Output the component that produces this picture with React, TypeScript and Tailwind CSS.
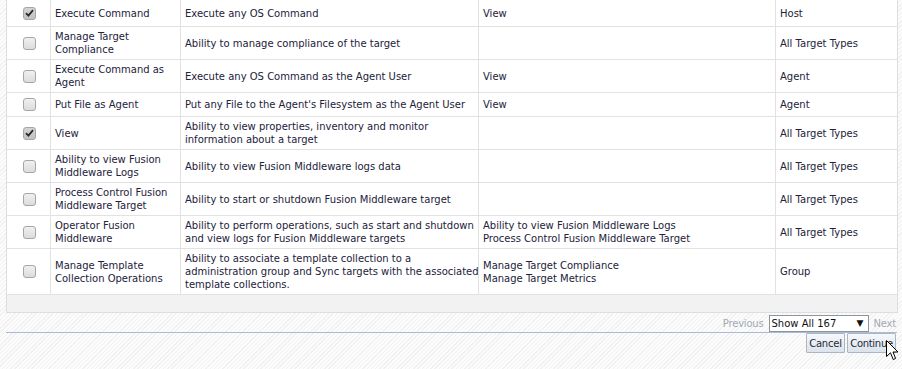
import React from "react";

type Row = {
  checked: boolean;
  name: string[];
  desc: string[];
  incl: string[];
  type: string;
  h: string;
};

const rows: Row[] = [
  { checked: true, name: ["Execute Command"], desc: ["Execute any OS Command"], incl: ["View"], type: "Host", h: "h-[27px]" },
  { checked: false, name: ["Manage Target", "Compliance"], desc: ["Ability to manage compliance of the target"], incl: [], type: "All Target Types", h: "h-[33px]" },
  { checked: false, name: ["Execute Command as", "Agent"], desc: ["Execute any OS Command as the Agent User"], incl: ["View"], type: "Agent", h: "h-[33px]" },
  { checked: false, name: ["Put File as Agent"], desc: ["Put any File to the Agent's Filesystem as the Agent User"], incl: ["View"], type: "Agent", h: "h-[24px]" },
  { checked: true, name: ["View"], desc: ["Ability to view properties, inventory and monitor", "information about a target"], incl: [], type: "All Target Types", h: "h-[33px]" },
  { checked: false, name: ["Ability to view Fusion", "Middleware Logs"], desc: ["Ability to view Fusion Middleware logs data"], incl: [], type: "All Target Types", h: "h-[33px]" },
  { checked: false, name: ["Process Control Fusion", "Middleware Target"], desc: ["Ability to start or shutdown Fusion Middleware target"], incl: [], type: "All Target Types", h: "h-[33px]" },
  { checked: false, name: ["Operator Fusion", "Middleware"], desc: ["Ability to perform operations, such as start and shutdown", "and view logs for Fusion Middleware targets"], incl: ["Ability to view Fusion Middleware Logs", "Process Control Fusion Middleware Target"], type: "All Target Types", h: "h-[33px]" },
  { checked: false, name: ["Manage Template", "Collection Operations"], desc: ["Ability to associate a template collection to a", "administration group and Sync targets with the associated", "template collections."], incl: ["Manage Target Compliance", "Manage Target Metrics"], type: "Group", h: "h-[46px]" },
];

function Lines({ lines }: { lines: string[] }) {
  return (
    <div className="flex flex-col">
      {lines.map((l, i) => (
        <span key={i} className="whitespace-nowrap">{l}</span>
      ))}
    </div>
  );
}

function Checkbox({ checked }: { checked: boolean }) {
  return (
    <div
      className={
        "w-[13px] h-[13px] rounded-[3px] border border-[#a6a6a6] flex items-center justify-center " +
        (checked
          ? "bg-[linear-gradient(#d4d4d4,#c2c2c2)]"
          : "bg-[linear-gradient(#f0f0f0,#dcdcdc)]")
      }
    >
      {checked && (
        <svg width="9" height="8" viewBox="0 0 9 8">
          <path d="M1 4.2 L3.4 6.6 L8 1.2" fill="none" stroke="#2a2a2a" strokeWidth="1.8" />
        </svg>
      )}
    </div>
  );
}

export default function App() {
  return (
    <div className="w-[902px] h-[369px] overflow-hidden relative bg-[image:repeating-linear-gradient(-45deg,#f1f1f1_0px,#f1f1f1_1px,#fcfcfc_1px,#fcfcfc_3px)] font-['DejaVu_Sans',sans-serif] text-[10px] leading-[13px] text-[#22223a]">
      <div className="ml-[6px] w-[892px] border-l border-r border-[#dedede] bg-white">
        {rows.map((r, i) => (
          <div
            key={i}
            className={"grid grid-cols-[44px_130px_298px_297px_121px] border-b border-[#e2e2e2] " + r.h}
          >
            <div className="border-r border-[#e2e2e2] flex items-center justify-center pl-[2px]">
              <Checkbox checked={r.checked} />
            </div>
            <div className="border-r border-[#e2e2e2] flex items-center pl-[4px]">
              <Lines lines={r.name} />
            </div>
            <div className="border-r border-[#e2e2e2] flex items-center pl-[4px]">
              <Lines lines={r.desc} />
            </div>
            <div className="border-r border-[#e2e2e2] flex items-center pl-[4px]">
              <Lines lines={r.incl} />
            </div>
            <div className="flex items-center pl-[4px]">
              <Lines lines={[r.type]} />
            </div>
          </div>
        ))}
      </div>
      <div className="ml-[6px] w-[892px] h-[18px] bg-[#f2f2f2] border-l border-r border-b border-[#dedede]" />
      <div className="flex justify-end items-center h-[19px] pr-[6px] pt-[1px]">
        <span className="text-[#a3aab3] mr-[5px] tracking-[-0.2px]">Previous</span>
        <div className="w-[100px] h-[17px] border border-[#8c96a0] bg-white flex items-center justify-between px-[2px]">
          <span className="text-[#111]">Show All 167</span>
          <span className="text-[9px] text-[#111] mr-[2px]">▼</span>
        </div>
        <span className="text-[#a3aab3] ml-[5px] tracking-[-0.2px]">Next</span>
      </div>
      <div className="ml-[6px] w-[891px] h-[1px] bg-[#a9bbd6]" />
      <div className="flex justify-end gap-[2px] pr-[6px]">
        <button className="w-[39px] h-[20px] flex items-center justify-center border border-[#aab6c2] rounded-[1px] bg-[linear-gradient(#f6f8fb,#dce3ea)] text-[#1e2a3a] leading-[13px] tracking-[-0.2px]">
          Cancel
        </button>
        <button className="w-[49px] h-[20px] flex items-center justify-center border border-[#aab6c2] rounded-[1px] bg-[linear-gradient(#f6f8fb,#dce3ea)] text-[#1e2a3a] leading-[13px] tracking-[-0.3px]">
          Continue
        </button>
      </div>
      <svg className="absolute left-[886px] top-[340px]" width="13" height="21" viewBox="0 0 13 21">
        <path d="M0.5 0.5 L0.5 16.5 L4.5 12.8 L7.2 19.5 L9.6 18.5 L7 12 L12 12 Z" fill="#fff" stroke="#000" strokeWidth="1" strokeLinejoin="miter" />
      </svg>
    </div>
  );
}
